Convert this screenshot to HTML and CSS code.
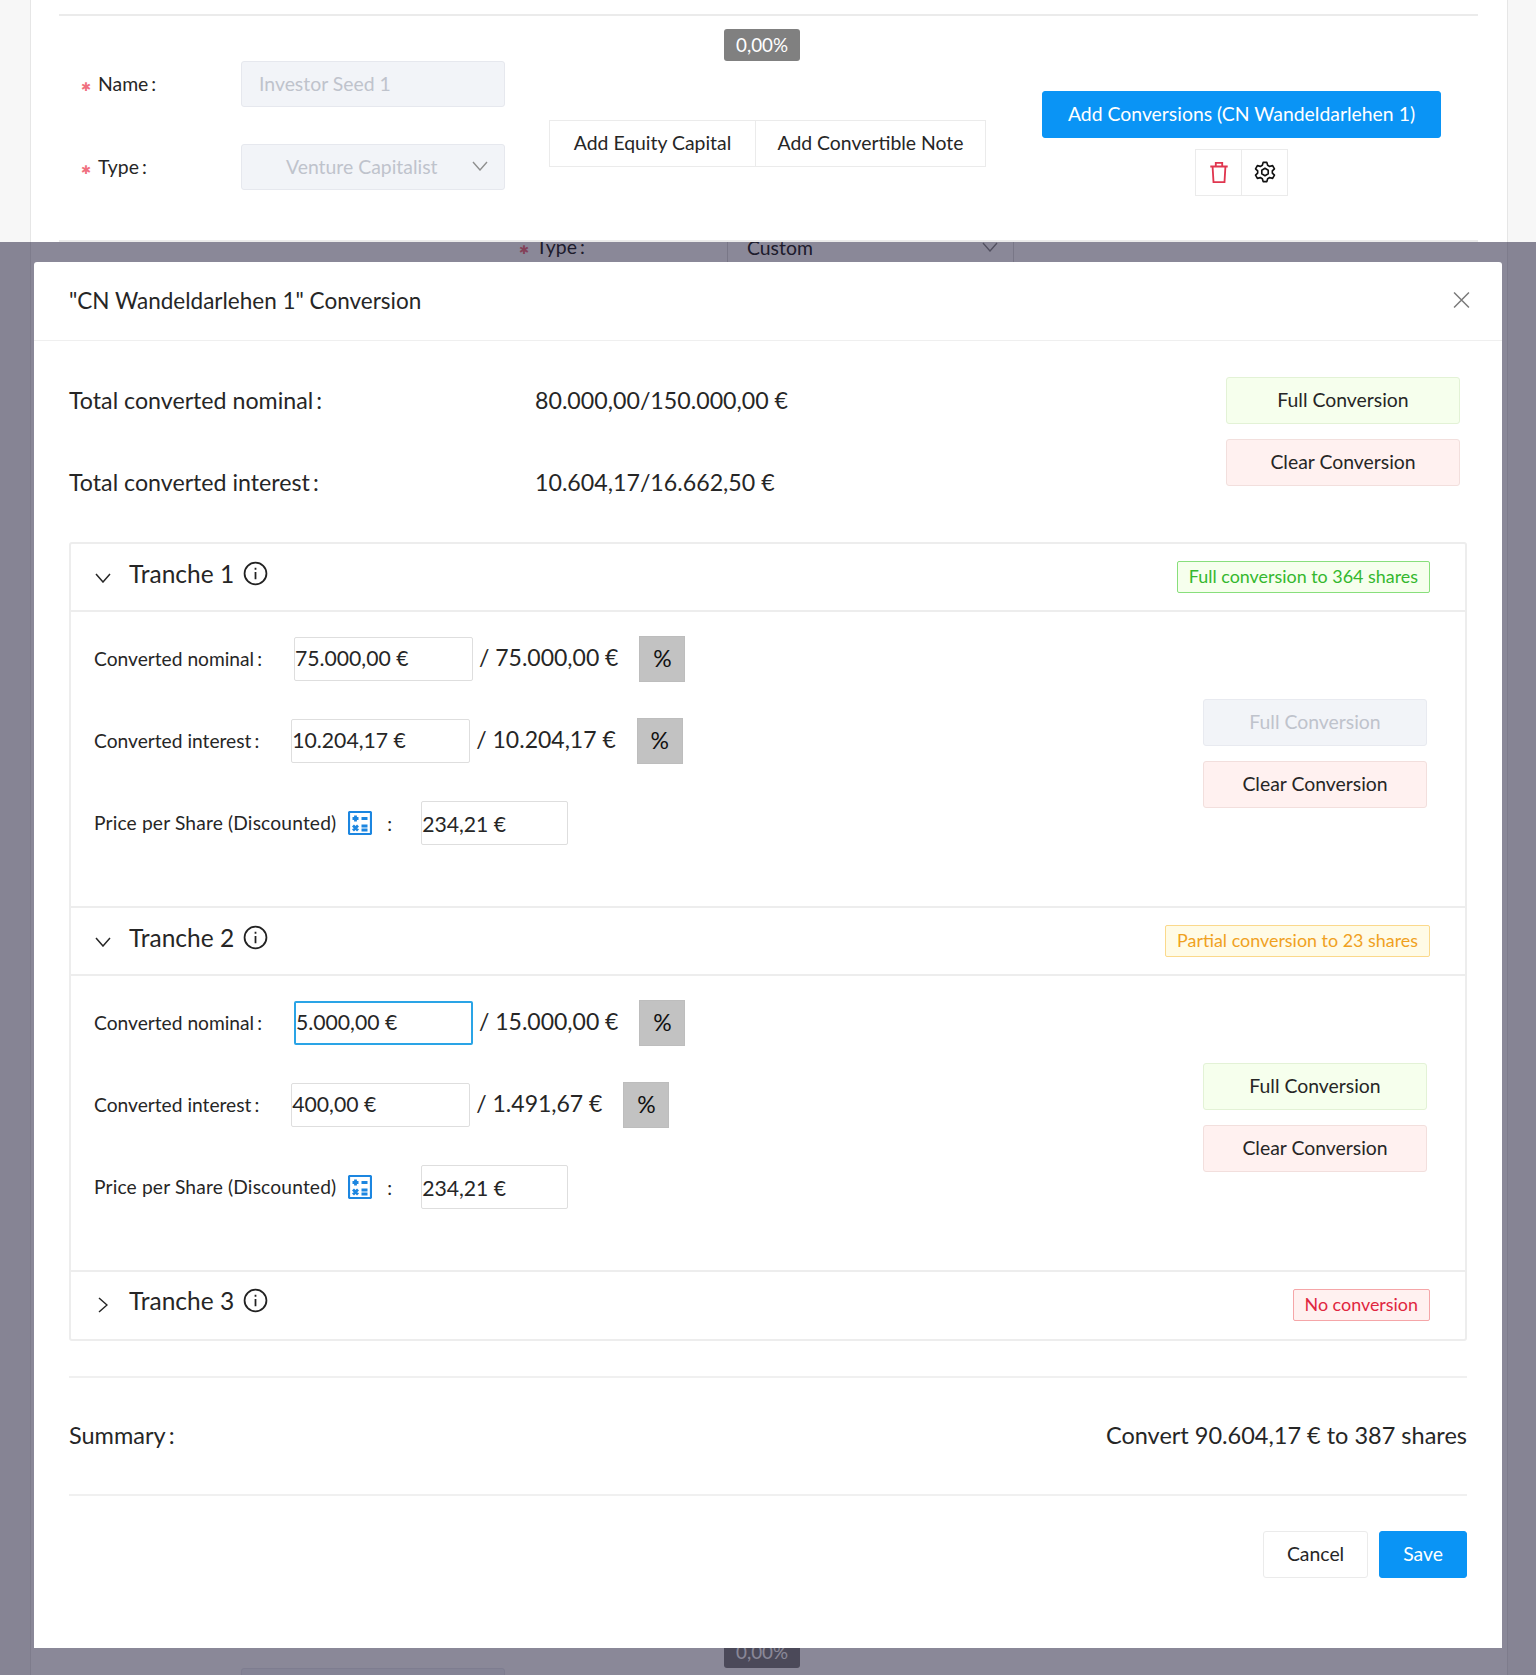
FILE: index.html
```html
<!DOCTYPE html>
<html lang="en">
<head>
<meta charset="utf-8">
<title>Conversion</title>
<link rel="stylesheet" href="styles.css">
</head>
<body>
<div class="page">
  <div class="panel">
    <div class="investor">
      <div class="tooltip">0,00%</div>
      <div class="investor-fields">
        <div class="field"><label class="field-label"><span class="req">✱</span>Name<span class="colon">:</span></label><input class="ctl" disabled value="Investor Seed 1"></div>
        <div class="field"><label class="field-label"><span class="req">✱</span>Type<span class="colon">:</span></label>
          <div class="ctl sel"><span>Venture Capitalist</span><svg class="sel-arrow" viewBox="0 0 16 10"><path d="M1 1l7 8 7-8"/></svg></div></div>
      </div>
      <div class="group add-group"><button class="btn seg">Add Equity Capital</button><button class="btn seg">Add Convertible Note</button></div>
      <div class="investor-actions">
        <button class="btn primary conv-btn">Add Conversions (CN Wandeldarlehen 1)</button>
        <div class="group icon-group">
          <button class="btn icon-btn"><svg class="ic" viewBox="0 0 24 24" fill="none" stroke="#e0364f" stroke-width="2"><path d="M2.500 6h19M8.500 6V2h7v4M5 6l1 17h12l1-17"/></svg></button>
          <button class="btn icon-btn"><svg class="ic" viewBox="0 0 24 24" fill="none" stroke="#111" stroke-width="1.8" stroke-linejoin="round"><path d="M10 1.500h4l.9 3.200 2.200 1.200 3.200-.9 2 3.500-2.300 2.300v2.400l2.300 2.300-2 3.500-3.200-.9-2.200 1.200-.9 3.200h-4l-.9-3.200-2.200-1.200-3.200.9-2-3.500 2.300-2.300v-2.400L1.700 8.500l2-3.500 3.200.9 2.200-1.200z"/><path d="M12 8l3.500 2v4L12 16l-3.500-2v-4z"/></svg></button>
        </div>
      </div>
    </div>
    <div class="behind">
      <div class="behind-field"><span class="req">✱</span>Type<span class="colon">:</span></div>
      <div class="behind-sel"><span>Custom</span><svg class="sel-arrow" viewBox="0 0 16 10"><path d="M1 1l7 8 7-8"/></svg></div>
    </div>
    <div class="behind-foot">
      <div class="tooltip behind-tip">0,00%</div>
      <div class="behind-input"></div>
    </div>
  </div>
  <div class="overlay">
    <div class="modal">
      <header class="modal-head">
        <h2 class="modal-title">"CN Wandeldarlehen 1" Conversion</h2>
        <svg class="close" viewBox="0 0 16 16"><path d="M1 1l14 14M15 1L1 15"/></svg>
      </header>
      <div class="modal-body">
        <section class="totals">
          <div class="totals-lines">
            <div class="total"><span class="total-label">Total converted nominal<span class="colon">:</span></span><span>80.000,00/150.000,00 €</span></div>
            <div class="total"><span class="total-label">Total converted interest<span class="colon">:</span></span><span>10.604,17/16.662,50 €</span></div>
          </div>
          <div class="btn-stack top-stack">
            <button class="btn soft-green">Full Conversion</button>
            <button class="btn soft-red">Clear Conversion</button>
          </div>
        </section>

        <section class="collapse">
          <div class="tr-head">
            <svg class="chev" viewBox="0 0 16 10"><path d="M1 1l7 8 7-8"/></svg>
            <span class="tr-name">Tranche 1</span>
            <svg class="info" viewBox="0 0 24 24"><circle cx="12" cy="12" r="10.500"/><path d="M12 10.500v7M12 6.500v2"/></svg>
            <span class="tag tag-green">Full conversion to 364 shares</span>
          </div>
          <div class="tr-body">
            <div class="tr-rows">
              <div class="row"><span class="row-label">Converted nominal<span class="colon">:</span></span><input class="amount" value="75.000,00 €"><span class="of">/ 75.000,00 €</span><span class="pct">%</span></div>
              <div class="row"><span class="row-label">Converted interest<span class="colon">:</span></span><input class="amount" value="10.204,17 €"><span class="of">/ 10.204,17 €</span><span class="pct">%</span></div>
              <div class="row"><span class="row-label price-label">Price per Share (Discounted)</span>
                <svg class="calc" viewBox="0 0 24 24"><rect x="1" y="1" width="22" height="22" rx="1"/><path class="calc-marks" d="M4.500 7.500h6M7.500 4.500v6M13.500 7.500h6M5 14.500l5 5M10 14.500l-5 5M13.500 15h6M13.500 19h6"/></svg>
                <span class="price-colon">:</span><input class="amount price" value="234,21 €"></div>
            </div>
            <div class="btn-stack tr-stack">
              <button class="btn soft-off" disabled>Full Conversion</button>
              <button class="btn soft-red">Clear Conversion</button>
            </div>
          </div>
          <div class="tr-head">
            <svg class="chev" viewBox="0 0 16 10"><path d="M1 1l7 8 7-8"/></svg>
            <span class="tr-name">Tranche 2</span>
            <svg class="info" viewBox="0 0 24 24"><circle cx="12" cy="12" r="10.500"/><path d="M12 10.500v7M12 6.500v2"/></svg>
            <span class="tag tag-orange">Partial conversion to 23 shares</span>
          </div>
          <div class="tr-body">
            <div class="tr-rows">
              <div class="row"><span class="row-label">Converted nominal<span class="colon">:</span></span><input class="amount focus" value="5.000,00 €"><span class="of">/ 15.000,00 €</span><span class="pct">%</span></div>
              <div class="row"><span class="row-label">Converted interest<span class="colon">:</span></span><input class="amount" value="400,00 €"><span class="of">/ 1.491,67 €</span><span class="pct">%</span></div>
              <div class="row"><span class="row-label price-label">Price per Share (Discounted)</span>
                <svg class="calc" viewBox="0 0 24 24"><rect x="1" y="1" width="22" height="22" rx="1"/><path class="calc-marks" d="M4.500 7.500h6M7.500 4.500v6M13.500 7.500h6M5 14.500l5 5M10 14.500l-5 5M13.500 15h6M13.500 19h6"/></svg>
                <span class="price-colon">:</span><input class="amount price" value="234,21 €"></div>
            </div>
            <div class="btn-stack tr-stack">
              <button class="btn soft-green">Full Conversion</button>
              <button class="btn soft-red">Clear Conversion</button>
            </div>
          </div>
          <div class="tr-head tr-last">
            <svg class="chev chev-right" viewBox="0 0 10 16"><path d="M1 1l8 7-8 7"/></svg>
            <span class="tr-name">Tranche 3</span>
            <svg class="info" viewBox="0 0 24 24"><circle cx="12" cy="12" r="10.500"/><path d="M12 10.500v7M12 6.500v2"/></svg>
            <span class="tag tag-red">No conversion</span>
          </div>
        </section>

        <section class="summary"><span>Summary<span class="colon">:</span></span><span>Convert 90.604,17 € to 387 shares</span></section>
        <footer class="modal-foot">
          <button class="btn foot-btn">Cancel</button>
          <button class="btn primary foot-btn">Save</button>
        </footer>
      </div>
    </div>
  </div>
</div>
</body>
</html>
```

FILE: styles.css
```css
* { box-sizing: border-box; }
html, body { margin: 0; padding: 0; }
body { font-family: "Lato", "Noto Sans", sans-serif; color: #262626; background: #f7f7f7; }
button, input { font-family: inherit; color: inherit; margin: 0; }

.page { position: relative; width: 1536px; height: 1675px; overflow: hidden; background: #f7f7f7; }
.panel { width: 1478px; height: 1675px; margin-left: 30px; background: #fff; border-left: 1px solid #e6e6e6; border-right: 1px solid #e6e6e6; padding: 14px 29px 0 28px; overflow: hidden; }

.investor { position: relative; display: flex; height: 228px; border-top: 2px solid #ebebeb; border-bottom: 2px solid #ebebeb; }
.tooltip { position: absolute; top: 13px; left: 665px; width: 76px; height: 32px; background: #808080; color: #fff; border-radius: 3px; font-size: 18.800px; line-height: 31px; text-align: center; }
.investor-fields { display: flex; flex-direction: column; gap: 37px; width: 490px; padding: 45px 0 0 22px; }
.field { display: flex; align-items: center; }
.field-label { display: block; width: 160px; padding-bottom: 2px; font-size: 19.400px; }
.req { display: inline-block; width: 17px; color: #f0707f; font-family: "DejaVu Sans", sans-serif; font-size: 12px; }
.colon { margin-left: 3px; }
.ctl { display: flex; width: 264px; height: 46px; align-items: center; padding: 0 17px 2px; background: #f2f4f8; border: 1px solid #e6e8ee; border-radius: 3px; color: #bfc3cc; font-size: 19.400px; }
.sel { position: relative; justify-content: space-between; padding: 0 16px 2px 44px; }
.sel-arrow { width: 16px; height: 10px; fill: none; stroke: #8f8f8f; stroke-width: 1.400; }

.btn { display: block; height: 47px; padding: 0 23px 3px; background: #fff; border: 1px solid #ebebeb; border-radius: 3px; font-size: 19.400px; white-space: nowrap; cursor: pointer; }
.primary { background: #0a94f5; border-color: #0a94f5; color: #fff; }
.group { display: flex; }
.seg { border-radius: 0; }
.seg + .seg { margin-left: -1px; }
.add-group { margin: 104px 0 0 0; width: 437px; height: 47px; }
.add-group .seg:first-child { width: 207px; padding: 0 0 3px; }
.add-group .seg:last-child { width: 231px; padding: 0 0 3px; }
.investor-actions { display: flex; flex-direction: column; align-items: center; width: 399px; margin: 75px 0 0 56px; gap: 11px; }
.conv-btn { width: 399px; padding: 0 0 3px; }
.icon-btn { width: 47px; padding: 0 0 2px; display: flex; align-items: center; justify-content: center; border-radius: 0; }
.icon-btn + .icon-btn { margin-left: -1px; }
.ic { width: 22px; height: 22px; }

.behind { display: flex; align-items: flex-start; height: 20px; font-size: 19.400px; overflow: hidden; }
.behind-field { width: 668px; padding-left: 460px; line-height: 24px; margin-top: -7px; }
.behind-sel { display: flex; justify-content: space-between; align-items: center; width: 287px; height: 30px; margin-top: -10px; padding: 0 15px 0 19px; border-right: 1px solid #ddd; border-left: 1px solid #ddd; }
.behind-foot { position: relative; height: 1404px; }
.behind-tip { top: 1374px; }
.behind-input { position: absolute; left: 182px; top: 1406px; width: 264px; height: 46px; background: #f2f4f8; border: 1px solid #e6e8ee; border-radius: 3px; }

.overlay { position: absolute; left: 0; right: 0; top: 242px; bottom: 0; background: rgba(21, 17, 49, 0.5); padding-top: 20px; }
.modal { width: 1468px; height: 1386px; margin: 0 auto; background: #fff; border-radius: 3px 3px 0 0; }
.modal-head { display: flex; align-items: center; justify-content: space-between; height: 79px; padding: 0 32px 2px 35px; border-bottom: 1px solid #efefef; }
.modal-title { margin: 0; font-size: 22.500px; font-weight: 400; }
.close { width: 17px; height: 18px; fill: none; stroke: #7a7a7a; stroke-width: 1.400; }
.modal-body { padding: 0 35px; }

.totals { display: flex; justify-content: space-between; height: 201px; padding-top: 36px; }
.totals-lines { display: flex; flex-direction: column; gap: 55px; padding-top: 10px; }
.total { display: flex; font-size: 23.200px; line-height: 27px; }
.total-label { width: 466px; }
.btn-stack { display: flex; flex-direction: column; gap: 15px; }
.top-stack { width: 234px; margin-right: 7px; }
.btn-stack .btn { width: 100%; padding: 0 0 3px; }
.soft-green { background: #f6ffed; border-color: #e3f2d6; }
.soft-red { background: #fff1f0; border-color: #f2dfdd; }
.soft-off { background: #f2f4f8; border-color: #e8eaf0; color: #bfc3cc; cursor: default; }

.collapse { border: 2px solid #ededed; border-radius: 3px; }
.tr-head { display: flex; align-items: center; height: 68px; padding: 0 35px 0 23px; border-bottom: 2px solid #ededed; }
.tr-last { height: 67px; padding-bottom: 2px; border-bottom: 0; }
.chev { width: 16px; height: 10px; margin: 1px 18px 0 1px; fill: none; stroke: #262626; stroke-width: 1.500; }
.chev-right { width: 10px; height: 16px; margin: 1px 21px 0 4px; }
.tr-name { font-size: 24.500px; margin: -8px 9px 0 0; }
.info { width: 25px; height: 25px; fill: none; stroke: #222; stroke-width: 1.700; margin-top: -8px; }
.tag { margin-left: auto; height: 32px; padding: 0 11px; border: 1px solid; border-radius: 2px; font-size: 17.900px; line-height: 29px; white-space: nowrap; }
.tag-green { color: #34b82e; background: #f6ffed; border-color: #88df7c; }
.tag-orange { color: #f0a11f; background: #fffbe6; border-color: #fbd98c; }
.tag-red { color: #e0263f; background: #fff1f0; border-color: #f5a6a8; }

.tr-body { display: flex; justify-content: space-between; height: 296px; padding: 25px 38px 0 23px; border-bottom: 2px solid #ededed; }
.tr-rows { display: flex; flex-direction: column; gap: 38px; }
.row { display: flex; align-items: center; height: 44px; font-size: 19.200px; }
.row-label { margin-right: 32px; padding-bottom: 2px; }
.price-label { letter-spacing: 0.16px; }
.amount { width: 179px; height: 44px; padding: 0 0 2px; background: #fff; border: 1px solid #dedede; border-radius: 2px; font-size: 21.200px; outline: 0; }
.focus { border-color: #2aa4e6; border-width: 2px; }
.of { margin-left: 6px; padding-bottom: 5px; font-size: 23px; }
.pct { display: flex; align-items: center; justify-content: center; width: 46px; height: 46px; margin-left: 21px; padding-bottom: 3px; background: #c2c2c2; border: 1px solid #bdbdbd; color: #111; font-size: 23px; }
.calc { width: 24px; height: 24px; margin: 0 -18px 0 -20px; fill: none; stroke: #1c86e0; stroke-width: 2.200; }
.calc-marks { stroke-width: 2.800; }
.price-colon { margin: 0 29px 0 33px; }
.price { width: 147px; padding-top: 2px; padding-bottom: 0; }
.tr-stack { width: 224px; margin-top: 62px; }

.summary { display: flex; justify-content: space-between; align-items: center; height: 120px; margin-top: 35px; padding-bottom: 2px; border-top: 2px solid #f0f0f0; border-bottom: 2px solid #f0f0f0; font-size: 23.500px; }
.modal-foot { display: flex; justify-content: flex-end; gap: 11px; padding-top: 35px; }
.foot-btn { padding: 0 23px 3px; }
```
